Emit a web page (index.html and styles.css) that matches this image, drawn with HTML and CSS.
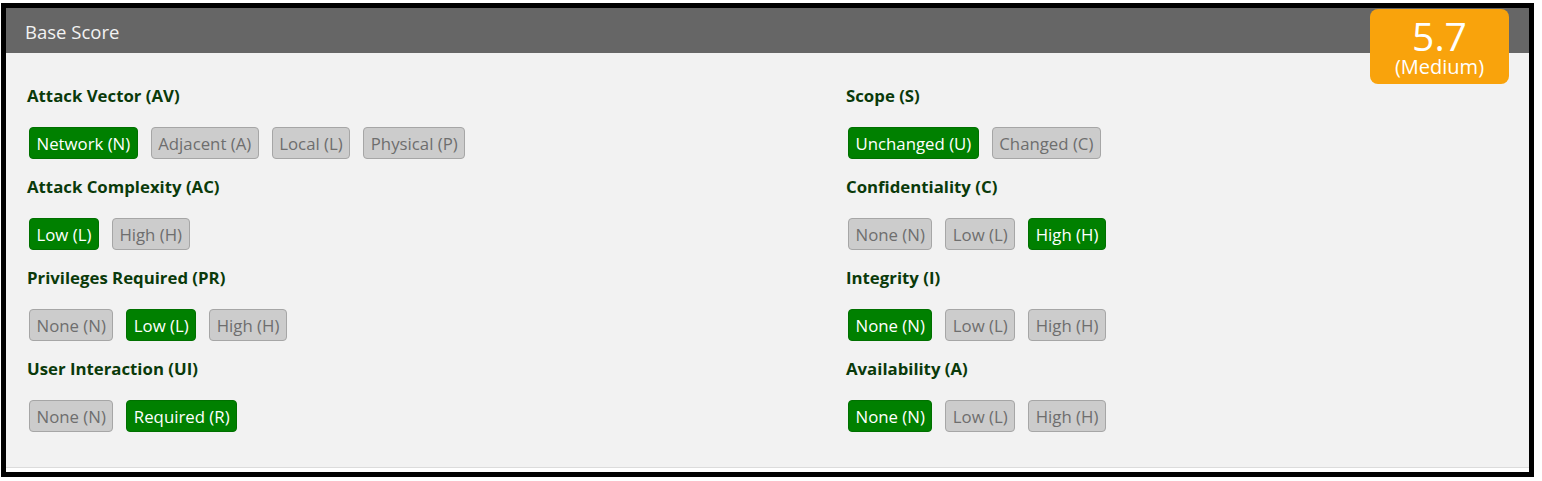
FILE: index.html
```html
<!DOCTYPE html>
<html>
<head>
<meta charset="utf-8">
<link rel="stylesheet" href="styles.css">
</head>
<body>
<div class="panel">
  <div class="panel-head">Base Score</div>
  <div class="score-badge">
    <div class="score-num">5.7</div>
    <div class="score-sev">(Medium)</div>
  </div>
  <div class="panel-body">
    <div class="metrics">
      <div class="col">
        <div class="metric">
          <div class="metric-label">Attack Vector (AV)</div>
          <div class="btns">
            <span class="btn on">Network (N)</span>
            <span class="btn">Adjacent (A)</span>
            <span class="btn">Local (L)</span>
            <span class="btn">Physical (P)</span>
          </div>
        </div>
        <div class="metric">
          <div class="metric-label">Attack Complexity (AC)</div>
          <div class="btns">
            <span class="btn on">Low (L)</span>
            <span class="btn">High (H)</span>
          </div>
        </div>
        <div class="metric">
          <div class="metric-label">Privileges Required (PR)</div>
          <div class="btns">
            <span class="btn">None (N)</span>
            <span class="btn on">Low (L)</span>
            <span class="btn">High (H)</span>
          </div>
        </div>
        <div class="metric">
          <div class="metric-label">User Interaction (UI)</div>
          <div class="btns">
            <span class="btn">None (N)</span>
            <span class="btn on">Required (R)</span>
          </div>
        </div>
      </div>
      <div class="col">
        <div class="metric">
          <div class="metric-label">Scope (S)</div>
          <div class="btns">
            <span class="btn on">Unchanged (U)</span>
            <span class="btn">Changed (C)</span>
          </div>
        </div>
        <div class="metric">
          <div class="metric-label">Confidentiality (C)</div>
          <div class="btns">
            <span class="btn">None (N)</span>
            <span class="btn">Low (L)</span>
            <span class="btn on">High (H)</span>
          </div>
        </div>
        <div class="metric">
          <div class="metric-label">Integrity (I)</div>
          <div class="btns">
            <span class="btn on">None (N)</span>
            <span class="btn">Low (L)</span>
            <span class="btn">High (H)</span>
          </div>
        </div>
        <div class="metric">
          <div class="metric-label">Availability (A)</div>
          <div class="btns">
            <span class="btn on">None (N)</span>
            <span class="btn">Low (L)</span>
            <span class="btn">High (H)</span>
          </div>
        </div>
      </div>
    </div>
  </div>
</div>
</body>
</html>
```
FILE: styles.css
```css
html, body {
  margin: 0;
  padding: 0;
  background: #ffffff;
}
body {
  font-family: "Open Sans", "Liberation Sans", sans-serif;
}
.panel {
  position: relative;
  margin: 3px 0 0 1px;
  width: 1523px;
  border: 5px solid #000;
  background: #fff;
  padding-bottom: 4px;
}
.panel-head {
  height: 45px;
  background: #666666;
  color: #f2f2f2;
  font-size: 18.5px;
  line-height: 47px;
  padding-left: 19px;
}
.score-badge {
  position: absolute;
  top: 1px;
  left: 1364px;
  width: 139px;
  height: 75px;
  background: #f9a30c;
  border-radius: 8px;
  color: #fff;
  text-align: center;
}
.score-num {
  font-size: 39px;
  line-height: 40px;
  padding-top: 7px;
}
.score-sev {
  font-size: 20px;
  line-height: 20px;
  margin-top: 1px;
}
.panel-body {
  background: #f2f2f2;
  border-bottom: 1px solid #dcdcdc;
  padding: 32px 0 35px 21px;
}
.metrics {
  display: grid;
  grid-template-columns: 819px 1fr;
}
.metric {
  display: flex;
  flex-direction: column;
  gap: 20px;
  margin-bottom: 17px;
}
.col .metric:last-child {
  margin-bottom: 0;
}
.metric-label {
  color: #0a3a0a;
  font-weight: bold;
  font-size: 16.8px;
  line-height: 22px;
}
.btns {
  display: flex;
  gap: 13px;
  padding-left: 2px;
}
.btn {
  display: inline-block;
  height: 30px;
  box-sizing: content-box;
  padding: 0 6.5px;
  line-height: 31px;
  font-size: 16.8px;
  border: 1px solid #a6a6a6;
  border-radius: 4px;
  background: #cccccc;
  color: #6e6e6e;
}
.btn.on {
  background: #008000;
  border-color: #007000;
  color: #ffffff;
}
```
